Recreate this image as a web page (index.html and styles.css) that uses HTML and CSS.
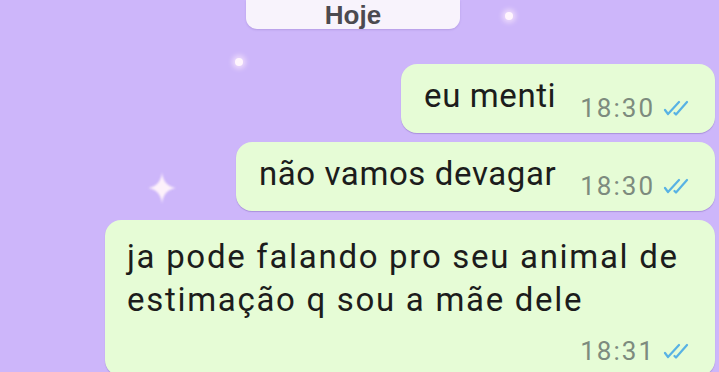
FILE: index.html
```html
<!DOCTYPE html>
<html lang="pt-BR">
<head>
    <meta charset="UTF-8">
    <meta name="viewport" content="width=device-width, initial-scale=1.0">
    <title>Conversa</title>
    <link rel="stylesheet" href="styles.css">
</head>
<body>
    <div class="chat">
        <span class="sparkle dot dot-top"></span>
        <span class="sparkle dot dot-left"></span>
        <span class="sparkle star">
            <svg width="28" height="32" viewBox="0 0 26 30">
                <path d="M13 0 Q14 13 26 15 Q14 17 13 30 Q12 17 0 15 Q12 13 13 0 Z" fill="#fdf1fb"/>
            </svg>
        </span>

        <div class="day">Hoje</div>

        <div class="bubble">
            <span class="text">eu menti</span>
            <span class="meta">18:30
                <svg class="ticks" width="28" height="16" viewBox="0 0 28 16">
                    <path d="M3 10 L6 14 L17 2 M12.5 13 L14 14.5 L25 2" />
                </svg>
            </span>
        </div>

        <div class="bubble">
            <span class="text">não vamos devagar</span>
            <span class="meta">18:30
                <svg class="ticks" width="28" height="16" viewBox="0 0 28 16">
                    <path d="M3 10 L6 14 L17 2 M12.5 13 L14 14.5 L25 2" />
                </svg>
            </span>
        </div>

        <div class="bubble long">
            <span class="text">ja pode falando pro seu animal de estimação q sou a mãe dele</span>
            <span class="meta">18:31
                <svg class="ticks" width="28" height="16" viewBox="0 0 28 16">
                    <path d="M3 10 L6 14 L17 2 M12.5 13 L14 14.5 L25 2" />
                </svg>
            </span>
        </div>
    </div>
</body>
</html>
```

FILE: styles.css
```css
body {
    margin: 0;
    padding: 0;
    background: #cdb6fa;
    font-family: Roboto, 'Liberation Sans', Arial, sans-serif;
    overflow: hidden;
}

.chat {
    position: relative;
    width: 719px;
    height: 372px;
    display: flex;
    flex-direction: column;
    align-items: flex-end;
    padding-right: 4px;
    box-sizing: border-box;
}

.day {
    align-self: flex-start;
    margin-left: 246px;
    width: 214px;
    height: 34px;
    box-sizing: border-box;
    padding-top: 1px;
    background: #f8f3fc;
    border-radius: 0 0 11px 11px;
    color: #4c4a50;
    font-family: 'Liberation Sans', Arial, sans-serif;
    font-size: 26px;
    font-weight: bold;
    line-height: 28px;
    text-align: center;
    box-shadow: 0 1px 2px rgba(90, 60, 150, 0.2);
}

.bubble {
    display: flex;
    align-items: flex-end;
    gap: 24px;
    margin-top: 35px;
    padding: 12px 25px 10px 23px;
    background: #e6fcd6;
    border-radius: 16px;
    box-shadow: 0 1px 1px rgba(90, 60, 150, 0.3);
}

.bubble + .bubble {
    margin-top: 9px;
}

.text {
    color: #1c1c1c;
    font-size: 33px;
    line-height: 40px;
    letter-spacing: 0.6px;
    margin-bottom: 7px;
}

.meta {
    display: flex;
    align-items: center;
    gap: 7px;
    color: #7d8b7e;
    font-size: 26px;
    line-height: 30px;
    letter-spacing: 2px;
    white-space: nowrap;
}

.ticks path {
    fill: none;
    stroke: #58b2e4;
    stroke-width: 2.2;
    stroke-linecap: round;
    stroke-linejoin: round;
}

.long {
    flex-direction: column;
    align-items: stretch;
    gap: 0;
    width: 610px;
    box-sizing: border-box;
    padding-top: 15px;
    padding-left: 22px;
}

.long .text {
    line-height: 43px;
    letter-spacing: 1.7px;
    margin-bottom: 0;
}

.long .meta {
    align-self: flex-end;
    margin-top: 15px;
}

/* background decorations */
.sparkle {
    position: absolute;
}

.dot {
    width: 8px;
    height: 8px;
    border-radius: 50%;
    background: #fff5fd;
    box-shadow: 0 0 5px 3px rgba(255, 240, 252, 0.6);
}

.dot-top {
    left: 505px;
    top: 12px;
}

.dot-left {
    left: 235px;
    top: 58px;
}

.star {
    left: 148px;
    top: 172px;
    filter: blur(0.8px);
}
```
